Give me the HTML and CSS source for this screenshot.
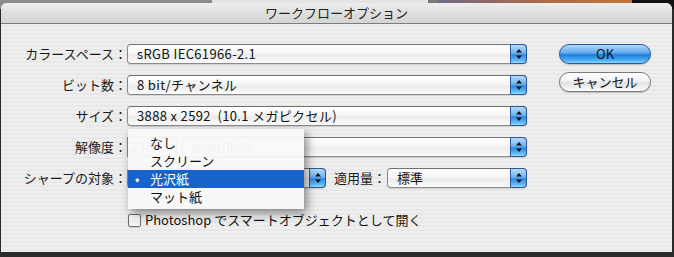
FILE: index.html
```html
<!DOCTYPE html>
<html>

<head>
    <meta charset="utf-8">
    <title>ワークフローオプション</title>
    <link rel="stylesheet" href="styles.css">
</head>

<body>
    <div class="strip">
        <span class="seg grey"></span>
        <span class="seg light"></span>
        <span class="seg grey2"></span>
        <span class="seg warm"></span>
        <span class="seg dark"></span>
    </div>

    <div class="window">
        <div class="titlebar">ワークフローオプション</div>

        <div class="content">
            <div class="form">
                <div class="row">
                    <span class="label">カラースペース：</span>
                    <div class="popup wide">
                        <span class="value latin">sRGB IEC61966-2.1</span>
                        <span class="arrows"><svg width="8" height="12" viewBox="0 0 8 12"><path d="M4 1 L7 4.5 L1 4.5 Z M4 11 L7 7.5 L1 7.5 Z" fill="#111"/></svg></span>
                    </div>
                </div>

                <div class="row">
                    <span class="label">ビット数：</span>
                    <div class="popup wide">
                        <span class="value latin">8 bit/チャンネル</span>
                        <span class="arrows"><svg width="8" height="12" viewBox="0 0 8 12"><path d="M4 1 L7 4.5 L1 4.5 Z M4 11 L7 7.5 L1 7.5 Z" fill="#111"/></svg></span>
                    </div>
                </div>

                <div class="row">
                    <span class="label">サイズ：</span>
                    <div class="popup wide">
                        <span class="value latin">3888 x 2592&nbsp;&nbsp;(10.1 メガピクセル)</span>
                        <span class="arrows"><svg width="8" height="12" viewBox="0 0 8 12"><path d="M4 1 L7 4.5 L1 4.5 Z M4 11 L7 7.5 L1 7.5 Z" fill="#111"/></svg></span>
                    </div>
                </div>

                <div class="row">
                    <span class="label">解像度：</span>
                    <div class="field">240</div>
                    <div class="popup unit">
                        <span class="value">pixel/inch</span>
                        <span class="arrows"><svg width="8" height="12" viewBox="0 0 8 12"><path d="M4 1 L7 4.5 L1 4.5 Z M4 11 L7 7.5 L1 7.5 Z" fill="#111"/></svg></span>
                    </div>
                </div>

                <div class="row">
                    <span class="label">シャープの対象：</span>
                    <!-- its value is hidden under the open menu -->
                    <div class="popup target">
                        <span class="value"></span>
                        <span class="arrows"><svg width="8" height="12" viewBox="0 0 8 12"><path d="M4 1 L7 4.5 L1 4.5 Z M4 11 L7 7.5 L1 7.5 Z" fill="#111"/></svg></span>
                    </div>
                    <span class="label small">適用量：</span>
                    <div class="popup amount">
                        <span class="value">標準</span>
                        <span class="arrows"><svg width="8" height="12" viewBox="0 0 8 12"><path d="M4 1 L7 4.5 L1 4.5 Z M4 11 L7 7.5 L1 7.5 Z" fill="#111"/></svg></span>
                    </div>
                </div>

                <div class="checkrow">
                    <span class="checkbox"></span>
                    <span class="checktext">Photoshop でスマートオブジェクトとして開く</span>
                </div>
            </div>

            <div class="buttons">
                <button class="btn default">OK</button>
                <button class="btn">キャンセル</button>
            </div>
        </div>

        <!-- open menu of シャープの対象 -->
        <div class="menu">
            <div class="item">なし</div>
            <div class="item">スクリーン</div>
            <div class="item selected">光沢紙</div>
            <div class="item">マット紙</div>
        </div>
    </div>
</body>

</html>
```

FILE: styles.css
```css
body {
    margin: 0;
    width: 674px;
    height: 257px;
    overflow: hidden;
    background: #2b2b2b;
    font-family: "Noto Sans CJK JP", "Liberation Sans", sans-serif;
    font-size: 13px;
    color: #111;
}

.strip {
    display: flex;
    height: 9px;
    margin-bottom: -6px;
}

.seg {
    height: 100%;
}

.grey {
    width: 212px;
    background: #8c8c8c;
}

.light {
    width: 216px;
    background: #e4e4e4;
}

.grey2 {
    width: 9px;
    background: #7a7a7a;
}

.warm {
    width: 195px;
    background: linear-gradient(to right, #6c6a86, #a86a4a, #c0753a);
}

.dark {
    flex: 1;
    background: #111;
}

.window {
    position: relative;
    margin-left: 1px;
    width: 671px;
    height: 249px;
    border-radius: 6px 6px 0 0;
    overflow: hidden;
    background: repeating-linear-gradient(to bottom, #efefef 0 2px, #e8e8e8 2px 4px);
}

.titlebar {
    height: 20px;
    line-height: 20px;
    text-align: center;
    color: #222;
    border-bottom: 1px solid #7c7c7c;
    background: linear-gradient(to bottom, #eeeeee, #dcdcdc 60%, #d4d4d4);
}

.content {
    display: flex;
    padding-top: 20px;
}

.form {
    display: flex;
    flex-direction: column;
    gap: 11px;
}

.row {
    display: flex;
    align-items: center;
    height: 20px;
}

.label {
    width: 126px;
    flex: none;
    text-align: right;
    line-height: 20px;
    color: #1a1a1a;
}

.label.small {
    width: auto;
    margin-left: 8px;
    margin-right: 1px;
}

.popup {
    position: relative;
    display: flex;
    box-sizing: border-box;
    height: 20px;
    border: 1px solid #8a8a8a;
    border-top-color: #707070;
    border-radius: 4px;
    background: linear-gradient(to bottom, #ffffff, #f6f6f6 45%, #ebebeb 55%, #fbfbfb);
    box-shadow: 0 1px 1px rgba(0, 0, 0, 0.12);
}

.popup.wide {
    width: 400px;
}

.popup.unit {
    width: 345px;
    margin-left: 5px;
}

.popup.target {
    width: 199px;
}

.popup.amount {
    width: 140px;
}

.value {
    flex: 1;
    padding-left: 9px;
    line-height: 18px;
    white-space: nowrap;
    overflow: hidden;
}

.value.latin {
    letter-spacing: 0.35px;
}

.arrows {
    display: flex;
    align-items: center;
    justify-content: center;
    width: 15px;
    margin: -1px -1px -1px 0;
    border: 1px solid #2a5896;
    border-radius: 0 4px 4px 0;
    background: linear-gradient(to bottom, #b4dafb, #6fb3f1 45%, #2f86e2 55%, #5cb8f7 85%, #9ad8fc);
}

.field {
    box-sizing: border-box;
    width: 50px;
    height: 20px;
    padding-left: 3px;
    line-height: 18px;
    border: 1px solid #8a8a8a;
    background: #fff;
    color: #888;
}

.unit .value {
    padding-left: 9px;
    color: #777;
}

.checkrow {
    display: flex;
    align-items: center;
    margin-top: 13px;
    padding-left: 127px;
    height: 16px;
}

.checkbox {
    box-sizing: border-box;
    width: 13px;
    height: 13px;
    border: 1px solid #6e6e6e;
    border-radius: 2px;
    background: linear-gradient(to bottom, #ffffff, #ececec 60%, #f8f8f8);
    box-shadow: 0 1px 1px rgba(0, 0, 0, 0.15);
}

.checktext {
    margin-left: 4px;
    line-height: 16px;
}

.buttons {
    display: flex;
    flex-direction: column;
    gap: 8px;
    margin-left: 32px;
}

.btn {
    box-sizing: border-box;
    width: 92px;
    height: 20px;
    padding: 0;
    font-family: inherit;
    font-size: 13px;
    line-height: 18px;
    color: #111;
    border: 1px solid #7a7a7a;
    border-radius: 10px;
    background: linear-gradient(to bottom, #ffffff, #f2f2f2 45%, #e2e2e2 55%, #fbfbfb);
    box-shadow: 0 1px 1px rgba(0, 0, 0, 0.2);
}

.btn.default {
    border-color: #2a5896;
    background: linear-gradient(to bottom, #b0d8fa, #5ea8ee 45%, #1f7bdb 55%, #4cb0f5 85%, #90d8fc);
}

.menu {
    position: absolute;
    left: 127px;
    top: 126px;
    width: 176px;
    padding: 5px 0 3px;
    background: rgba(249, 249, 249, 0.94);
    box-shadow: 3px 4px 9px rgba(0, 0, 0, 0.45);
}

.item {
    position: relative;
    height: 18px;
    line-height: 18px;
    padding-left: 22px;
}

.item.selected {
    background: #1664cb;
    color: #fff;
}

.item.selected::before {
    content: "•";
    position: absolute;
    left: 7px;
}
```
